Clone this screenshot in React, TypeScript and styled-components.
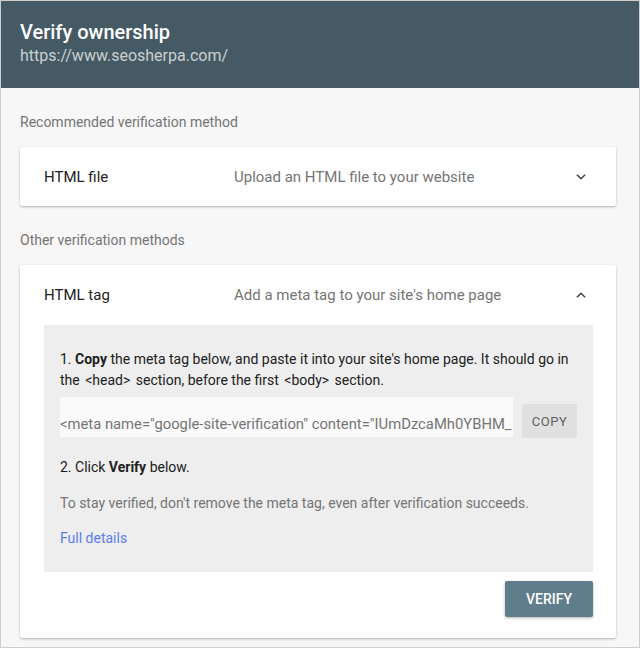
import React from "react";
import styled, { createGlobalStyle } from "styled-components";

const GlobalStyle = createGlobalStyle`
  html, body {
    margin: 0;
    padding: 0;
    background: #f7f7f7;
  }
  * {
    box-sizing: border-box;
  }
`;

const Frame = styled.div`
  width: 640px;
  height: 648px;
  border: 1px solid #cfcfcf;
  background: #f7f7f7;
  font-family: Roboto, "Liberation Sans", sans-serif;
  color: #212121;
  overflow: hidden;
`;

const Header = styled.header`
  height: 87px;
  background: #455a64;
  padding: 18px 19px 0;
  display: flex;
  flex-direction: column;
`;

const Title = styled.h1`
  margin: 0;
  font-size: 20px;
  line-height: 26px;
  font-weight: 500;
  color: #ffffff;
`;

const Url = styled.div`
  font-size: 16px;
  line-height: 22px;
  color: rgba(255, 255, 255, 0.72);
`;

const Content = styled.main`
  padding: 0 23px 0 19px;
  display: flex;
  flex-direction: column;
`;

const SectionLabel = styled.div`
  font-size: 14px;
  line-height: 20px;
  color: #757575;
  padding: 24px 0 15px;
`;

const Card = styled.section`
  background: #ffffff;
  border-radius: 2px;
  box-shadow: 0 1px 3px rgba(0, 0, 0, 0.22), 0 1px 1px rgba(0, 0, 0, 0.08);
`;

const CardRow = styled.div<{ $height: number }>`
  height: ${(p) => p.$height}px;
  display: flex;
  align-items: center;
  padding: 0 28px 0 24px;
`;

const MethodName = styled.div`
  width: 190px;
  font-size: 15px;
  color: #212121;
`;

const MethodDesc = styled.div`
  flex: 1;
  font-size: 15px;
  color: #757575;
`;

const Chevron = styled.svg`
  width: 14px;
  height: 14px;
  flex: none;
`;

const Panel = styled.div`
  margin: 0 23px 0 24px;
  background: #eeeeee;
  padding: 24px 16px 23px;
  font-size: 14px;
  line-height: 21px;
  color: #212121;
`;

const Step = styled.p`
  margin: 0;
`;

const Code = styled.span`
  padding: 0 2px;
`;

const TagRow = styled.div`
  display: flex;
  align-items: flex-start;
  gap: 9px;
  margin: 6px 0 19px;
`;

const TagInput = styled.div`
  width: 453px;
  height: 40px;
  background: #fafafa;
  color: #757575;
  font-size: 14.8px;
  display: flex;
  align-items: flex-end;
  padding-bottom: 2px;
  white-space: nowrap;
  overflow: hidden;
`;

const CopyButton = styled.button`
  width: 55px;
  height: 34px;
  margin-top: 7px;
  border: none;
  border-radius: 2px;
  background: #e0e0e0;
  color: #616161;
  font-family: Roboto, "Liberation Sans", sans-serif;
  font-size: 13px;
  letter-spacing: 0.5px;
`;

const Note = styled.p`
  margin: 15px 0 0;
  color: #757575;
`;

const Link = styled.a`
  display: block;
  margin-top: 14px;
  color: #5c7df5;
  text-decoration: none;
`;

const Actions = styled.div`
  display: flex;
  justify-content: flex-end;
  padding: 9px 23px 21px;
`;

const VerifyButton = styled.button`
  width: 88px;
  height: 36px;
  border: none;
  border-radius: 2px;
  background: #607d8b;
  color: #ffffff;
  font-family: Roboto, "Liberation Sans", sans-serif;
  font-size: 14px;
  font-weight: 500;
  box-shadow: 0 1px 3px rgba(0, 0, 0, 0.3);
`;

function ChevronIcon({ up }: { up?: boolean }) {
  return (
    <Chevron viewBox="0 0 24 24">
      <path
        d={up ? "M5 16l7-7 7 7" : "M5 8l7 7 7-7"}
        fill="none"
        stroke="#424242"
        strokeWidth="2.6"
      />
    </Chevron>
  );
}

export default function App() {
  return (
    <Frame>
      <GlobalStyle />
      <Header>
        <Title>Verify ownership</Title>
        <Url>https://www.seosherpa.com/</Url>
      </Header>
      <Content>
        <SectionLabel>Recommended verification method</SectionLabel>
        <Card>
          <CardRow $height={59}>
            <MethodName>HTML file</MethodName>
            <MethodDesc>Upload an HTML file to your website</MethodDesc>
            <ChevronIcon />
          </CardRow>
        </Card>
        <SectionLabel>Other verification methods</SectionLabel>
        <Card>
          <CardRow $height={60}>
            <MethodName>HTML tag</MethodName>
            <MethodDesc>Add a meta tag to your site's home page</MethodDesc>
            <ChevronIcon up />
          </CardRow>
          <Panel>
            <Step>
              1. <b>Copy</b> the meta tag below, and paste it into your site's home page. It should go in
              the <Code>&lt;head&gt;</Code> section, before the first <Code>&lt;body&gt;</Code> section.
            </Step>
            <TagRow>
              <TagInput>
                &lt;meta name="google-site-verification" content="IUmDzcaMh0YBHM_
              </TagInput>
              <CopyButton>COPY</CopyButton>
            </TagRow>
            <Step>
              2. Click <b>Verify</b> below.
            </Step>
            <Note>To stay verified, don't remove the meta tag, even after verification succeeds.</Note>
            <Link href="#">Full details</Link>
          </Panel>
          <Actions>
            <VerifyButton>VERIFY</VerifyButton>
          </Actions>
        </Card>
      </Content>
    </Frame>
  );
}
